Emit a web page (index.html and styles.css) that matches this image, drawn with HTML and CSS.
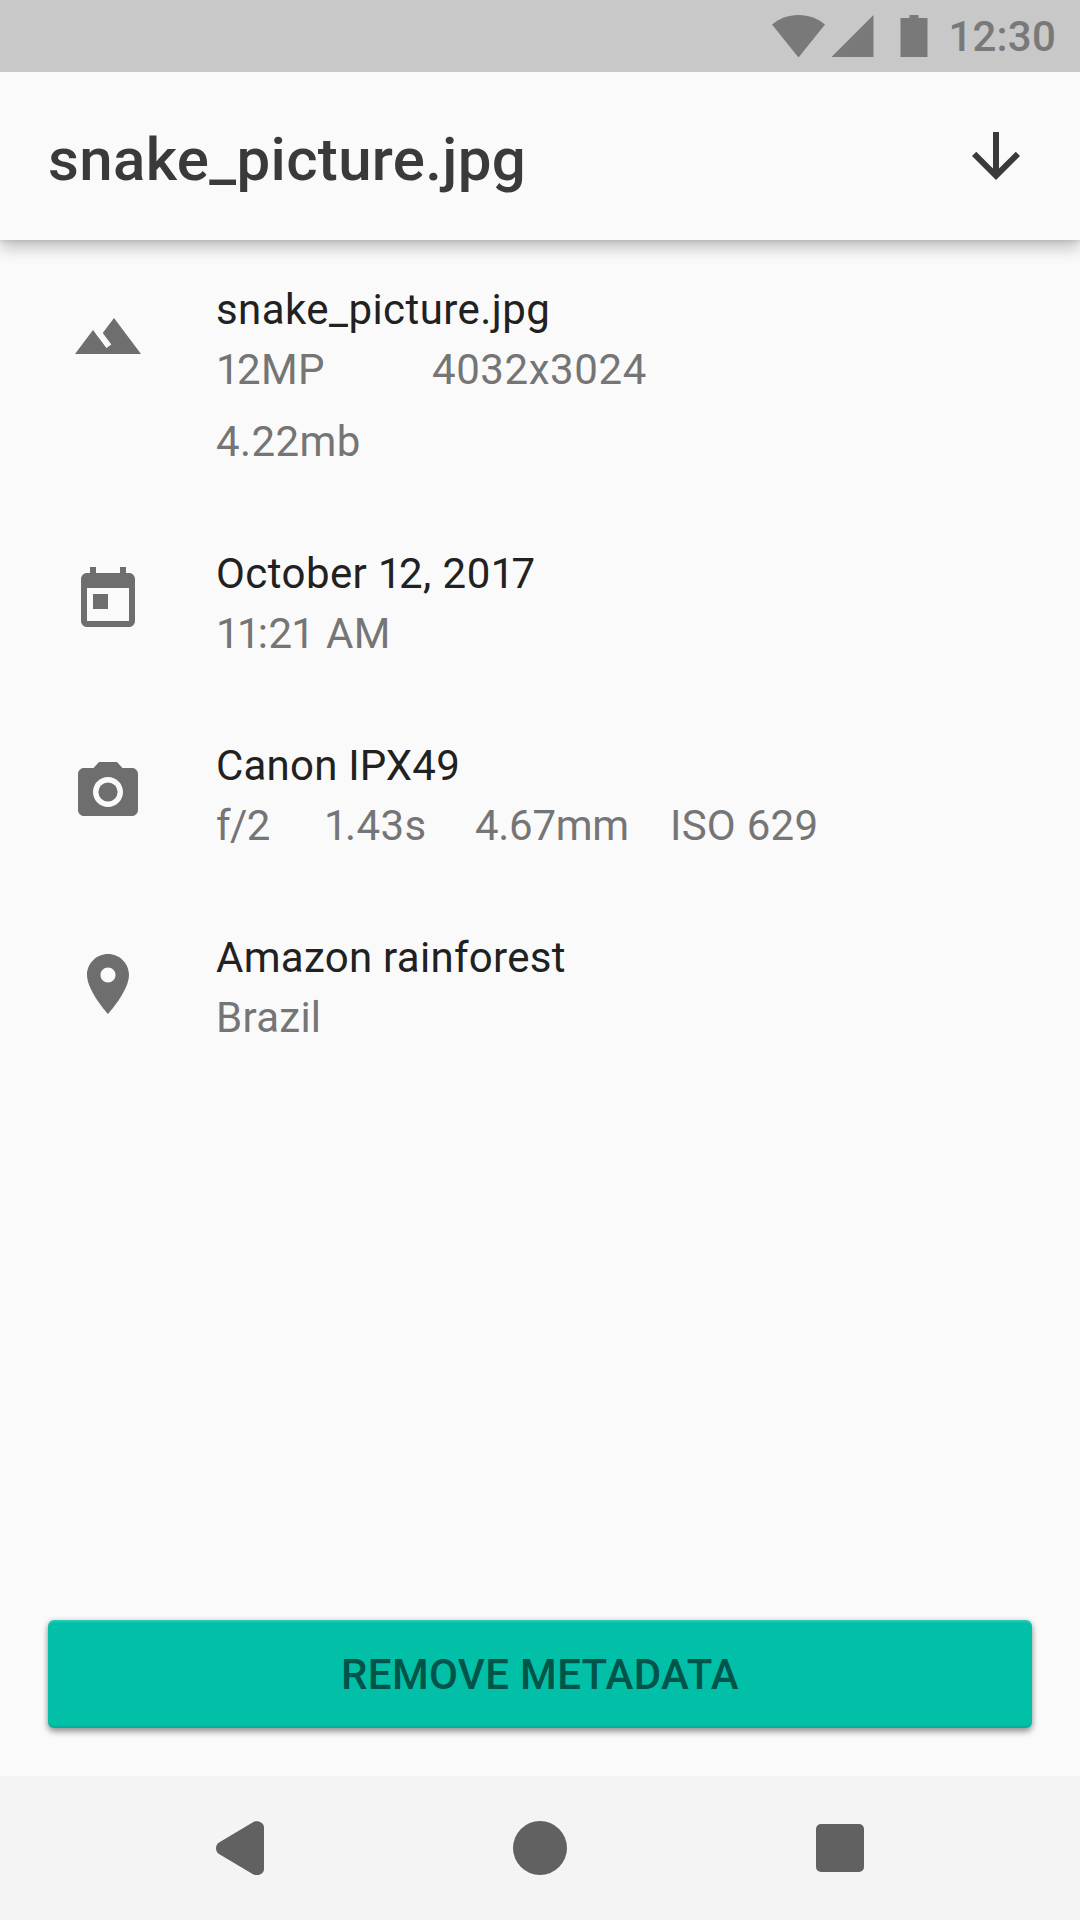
FILE: index.html
```html
<!DOCTYPE html>
<html lang="en">
<head>
<meta charset="utf-8">
<title>snake_picture.jpg</title>
<link rel="stylesheet" href="styles.css">
</head>
<body>
<div class="screen">
  <div class="status-bar">
    <svg class="status-icons" width="156" height="42" viewBox="0 0 156 42" aria-hidden="true">
      <path d="M0 9.5C7 3.8 16 0 26.500 0S46 3.800 53 9.500L26.500 42.500z"/>
      <path d="M101.500 0v42h-42z"/>
      <path d="M137.500 0h9v3h9v39h-27V3h9z"/>
    </svg>
    <span class="clock">12:30</span>
  </div>

  <header class="app-bar">
    <h1 class="title">snake_picture.jpg</h1>
    <svg class="icon download" viewBox="0 0 24 24" aria-label="Download"><path d="M20 12l-1.410-1.410L13 16.170V4h-2v12.170l-5.580-5.590L4 12l8 8 8-8z"/></svg>
  </header>

  <main class="details">
    <section class="item">
      <svg class="icon" viewBox="0 0 24 24" aria-hidden="true"><path d="M14 6l-3.750 5 2.850 3.800-1.600 1.200C9.810 13.750 7 10 7 10l-6 8h22L14 6z"/></svg>
      <div class="text">
        <p class="primary">snake_picture.jpg</p>
        <p class="secondary photo-size"><span><span class="one">1</span>2MP</span><span class="pixels">4032x3024</span></p>
        <p class="secondary file-size">4.22mb</p>
      </div>
    </section>
    <section class="item">
      <svg class="icon" viewBox="0 0 24 24" aria-hidden="true"><path d="M19 3h-1V1h-2v2H8V1H6v2H5c-1.110 0-1.990.9-1.990 2L3 19c0 1.100.89 2 2 2h14c1.100 0 2-.9 2-2V5c0-1.100-.9-2-2-2zm0 16H5V8h14v11zM7 10h5v5H7z"/></svg>
      <div class="text">
        <p class="primary">October <span class="one">1</span>2, 20<span class="one">1</span>7</p>
        <p class="secondary"><span class="one">11</span>:<span class="two">2</span>1 AM</p>
      </div>
    </section>
    <section class="item">
      <svg class="icon" viewBox="0 0 24 24" aria-hidden="true"><circle cx="12" cy="12" r="3.200"/><path d="M9 2L7.170 4H4c-1.100 0-2 .9-2 2v12c0 1.100.9 2 2 2h16c1.100 0 2-.9 2-2V6c0-1.100-.9-2-2-2h-3.170L15 2H9zm3 15c-2.760 0-5-2.240-5-5s2.240-5 5-5 5 2.240 5 5-2.240 5-5 5z"/></svg>
      <div class="text">
        <p class="primary camera">Canon IPX49</p>
        <p class="secondary exposure"><span class="aperture">f/2</span><span><span class="one">1</span>.43s</span><span class="focal">4.67mm</span><span class="iso">ISO 629</span></p>
      </div>
    </section>
    <section class="item">
      <svg class="icon" viewBox="0 0 24 24" aria-hidden="true"><path d="M12 2C8.130 2 5 5.130 5 9c0 5.250 7 13 7 13s7-7.750 7-13c0-3.870-3.130-7-7-7zm0 9.500c-1.380 0-2.500-1.120-2.500-2.500s1.120-2.500 2.500-2.500 2.500 1.120 2.500 2.500-1.120 2.500-2.500 2.500z"/></svg>
      <div class="text">
        <p class="primary place">Amazon rainforest</p>
        <p class="secondary place">Brazil</p>
      </div>
    </section>
  </main>

  <div class="actions"><button class="remove" type="button">REMOVE METADATA</button></div>

  <nav class="nav-bar">
    <svg width="54" height="54" viewBox="0 0 54 54" aria-label="Back"><path d="M40 1.200 6 21.500C2 24 2 30.500 6 33L40 53.200C44 55.500 51 53.500 51 48V6.500C51 1 44-1.200 40 1.200z"/></svg>
    <svg width="54" height="54" viewBox="0 0 54 54" aria-label="Home"><circle cx="27" cy="27" r="27"/></svg>
    <svg width="54" height="54" viewBox="0 0 54 54" aria-label="Recent apps"><rect x="3" y="3" width="48" height="48" rx="5"/></svg>
  </nav>
</div>
</body>
</html>
```

FILE: styles.css
```css
* { box-sizing: border-box; }

body {
  margin: 0;
  background: #fafafa;
  font-family: Roboto, "Liberation Sans", sans-serif;
}

.screen {
  display: flex;
  flex-direction: column;
  width: 1080px;
  height: 1920px;
  background: #fafafa;
}

svg { display: block; flex: none; }

.status-bar {
  display: flex;
  position: relative;
  z-index: 1;
  flex: none;
  justify-content: flex-end;
  gap: 20.5px;
  height: 72px;
  padding-right: 24px;
  background: #c8c8c8;
  color: #797979;
}

.status-icons { margin-top: 15px; fill: currentColor; }

.clock {
  font-size: 42px;
  font-weight: 500;
  line-height: 74px;
  letter-spacing: 0.2px;
}

.app-bar {
  display: flex;
  flex: none;
  justify-content: space-between;
  align-items: flex-start;
  height: 168px;
  padding: 48px 48px 0;
  color: #3a3a3a;
  background: #fafafa;
  box-shadow: 0 9px 14px rgba(0, 0, 0, 0.2), 0 2px 4px rgba(0, 0, 0, 0.1);
}

.title {
  margin: 4px 0 0;
  font-size: 60px;
  font-weight: 500;
  line-height: 72px;
  letter-spacing: 0.35px;
}

.icon {
  width: 72px;
  height: 72px;
  fill: #6e6e6e;
}

.download { fill: #3a3a3a; }

.details {
  display: flex;
  flex: 1;
  flex-direction: column;
  gap: 72px;
  padding: 40px 48px 0 72px;
}

.item { display: flex; gap: 72px; }
.item .icon { margin-top: 20px; }

.text {
  font-size: 42px;
  line-height: 60px;
  letter-spacing: 0.43px;
  white-space: nowrap;
}

.text p { margin: 0; }
.primary { color: #212121; }
.secondary { color: #757575; }
.one { letter-spacing: -2.7px; }
.two { letter-spacing: -0.9px; }
.place { letter-spacing: 0.28px; }
.camera { letter-spacing: 0.2px; }

.photo-size { display: grid; grid-template-columns: 216px auto; }
.pixels { letter-spacing: 0.57px; }
.text .file-size { margin-top: 12px; }

.exposure { display: grid; grid-template-columns: 108px 151px 195px auto; }
.aperture { letter-spacing: -0.6px; }
.focal { letter-spacing: -0.3px; }
.iso { letter-spacing: 0.25px; }

.actions { flex: none; padding: 0 48px 48px; }

.remove {
  display: block;
  width: 100%;
  height: 108px;
  padding: 1px 0 0;
  border: 0;
  border-radius: 6px;
  background: #02c0a7;
  color: #00544a;
  font: 500 42px/107px Roboto, "Liberation Sans", sans-serif;
  letter-spacing: 0.33px;
  box-shadow: 0 4px 6px rgba(0, 0, 0, 0.32), 0 1px 6px rgba(0, 0, 0, 0.18),
    inset 0 2px 1px rgba(255, 255, 255, 0.15), inset 0 -2px 1px rgba(0, 0, 0, 0.08);
}

.nav-bar {
  display: flex;
  flex: none;
  justify-content: center;
  align-items: center;
  gap: 246px;
  height: 144px;
  background: #f4f4f4;
  fill: #616161;
}
```
